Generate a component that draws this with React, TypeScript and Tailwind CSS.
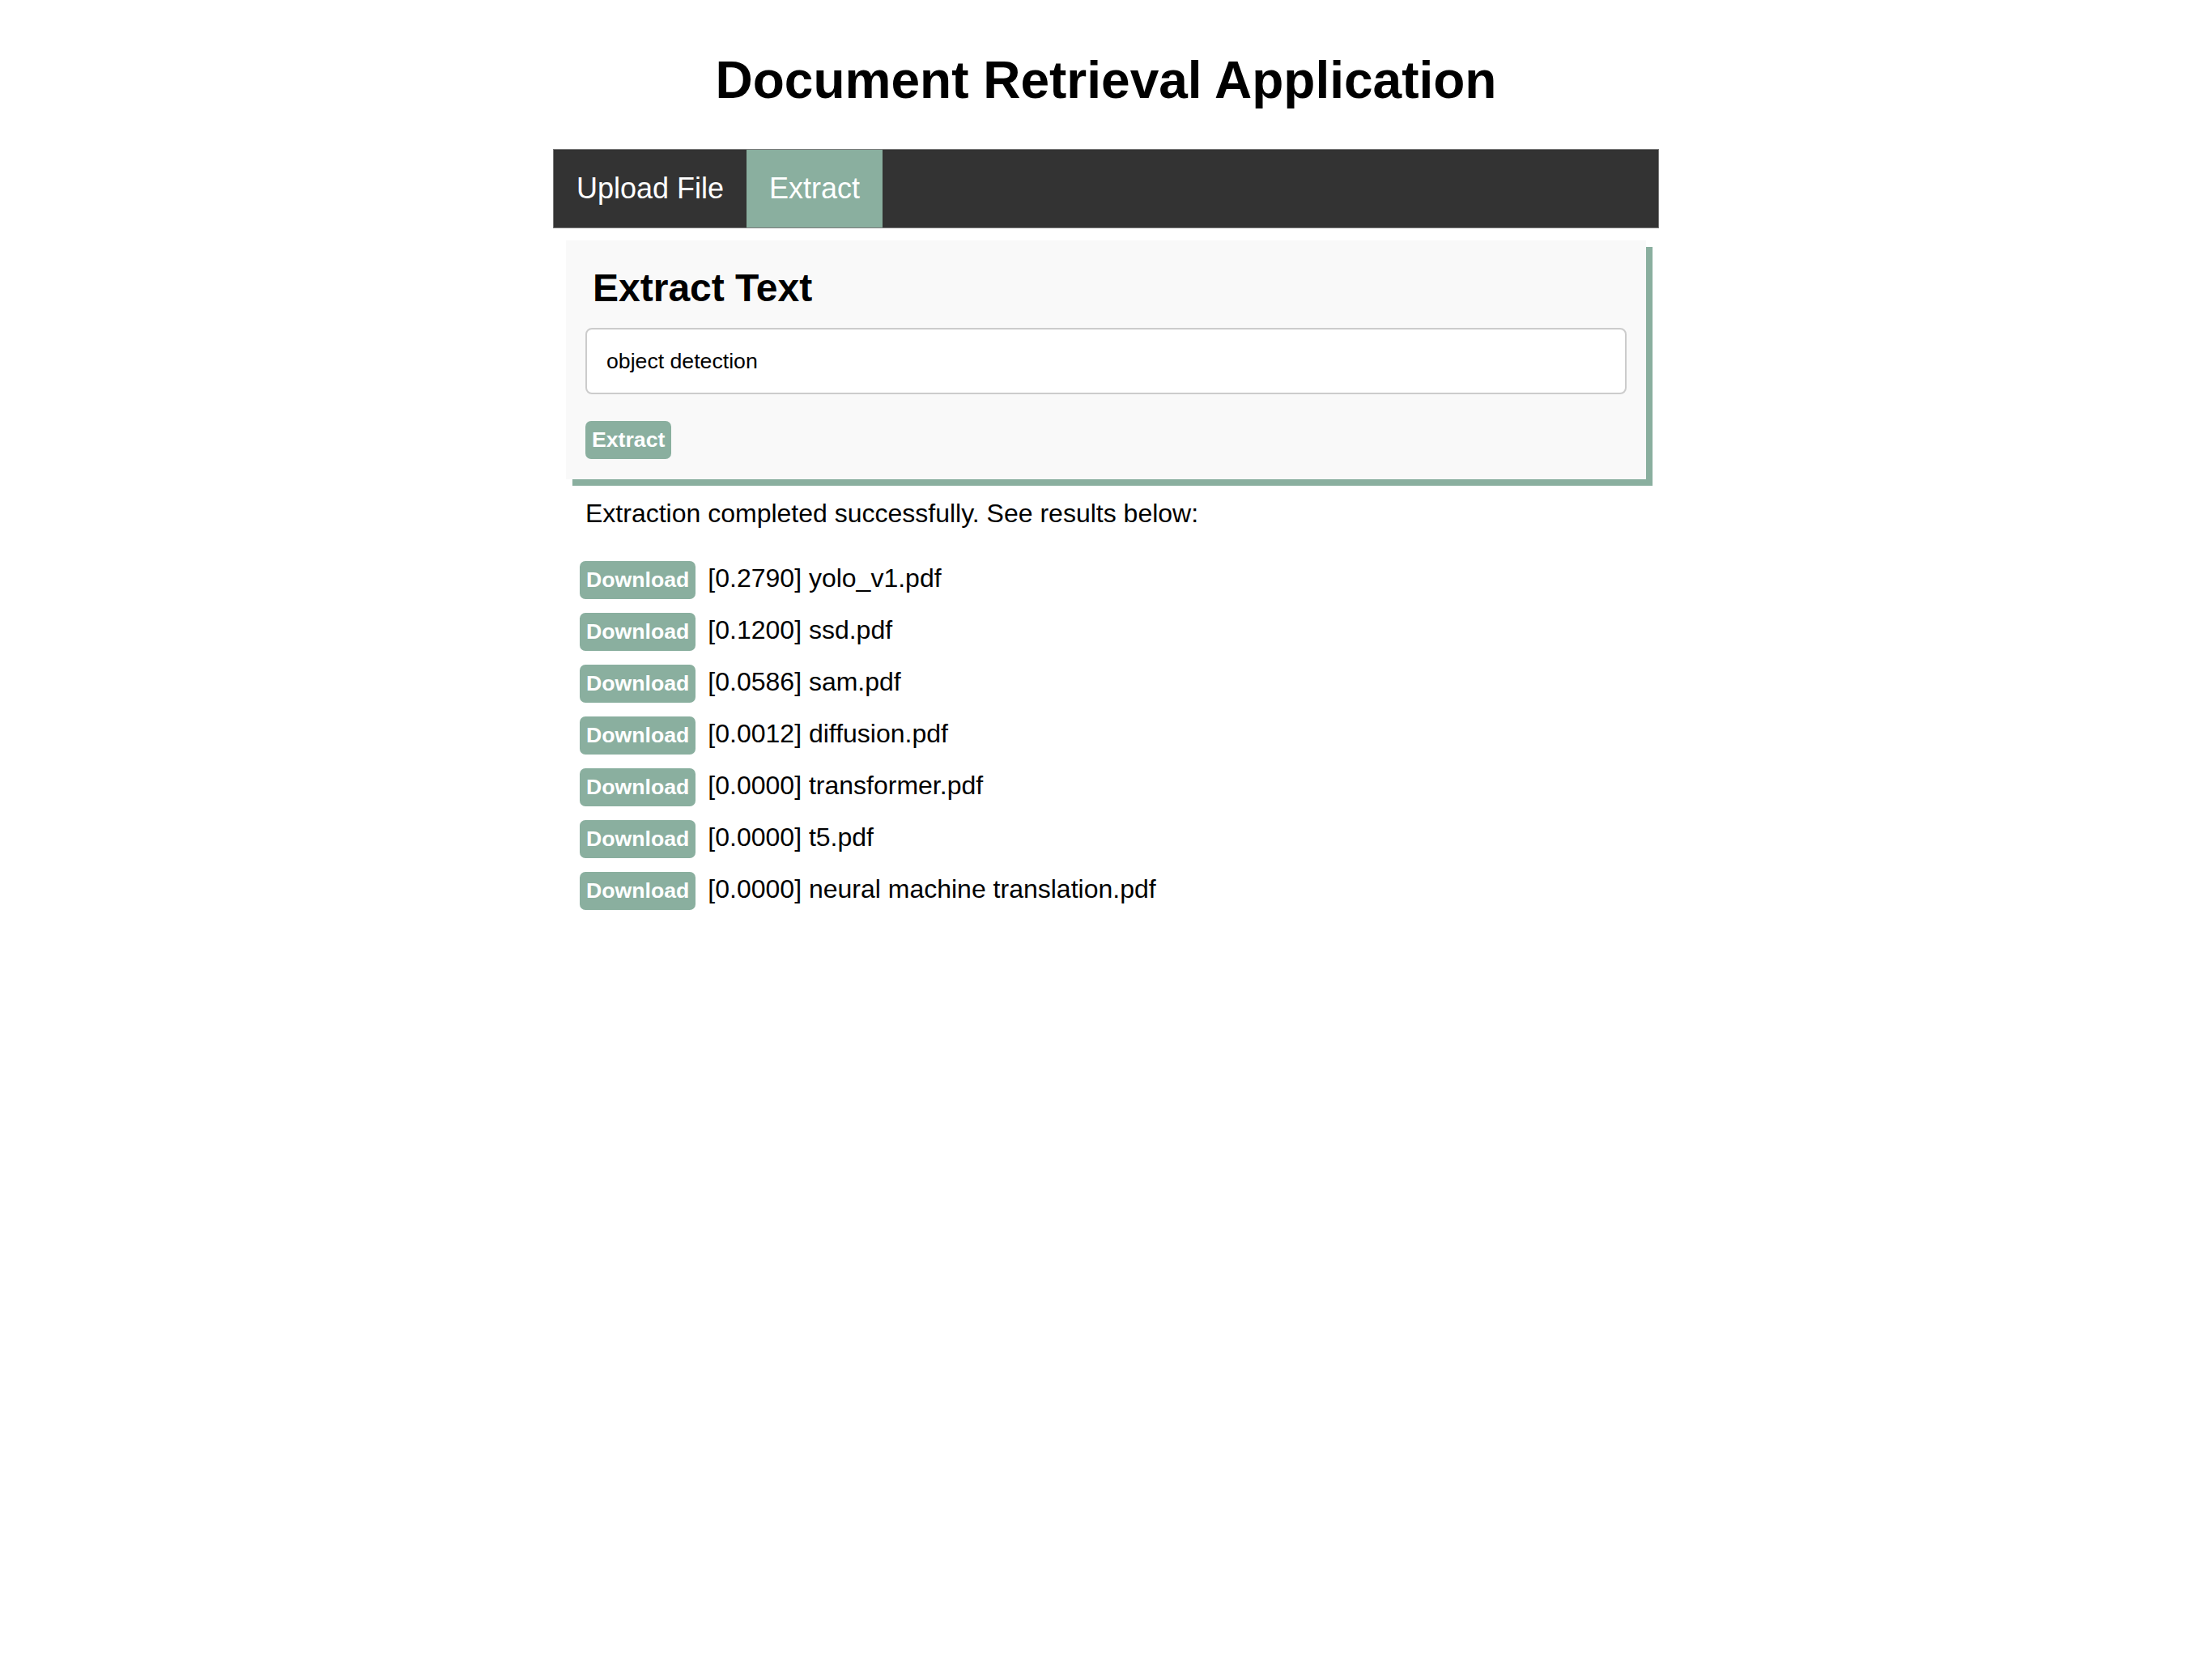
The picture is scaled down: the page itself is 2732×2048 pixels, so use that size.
import { useState } from "react";

const results = [
  { score: "0.2790", name: "yolo_v1.pdf" },
  { score: "0.1200", name: "ssd.pdf" },
  { score: "0.0586", name: "sam.pdf" },
  { score: "0.0012", name: "diffusion.pdf" },
  { score: "0.0000", name: "transformer.pdf" },
  { score: "0.0000", name: "t5.pdf" },
  { score: "0.0000", name: "neural machine translation.pdf" },
];

export default function App() {
  const [tab, setTab] = useState("extract");
  const [query, setQuery] = useState("object detection");

  return (
    <div className="min-h-[2048px] bg-white pt-[62px] font-['Liberation_Sans',Arial,sans-serif] text-black">
      <h1 className="text-center text-[64px] font-bold leading-[74px]">Document Retrieval Application</h1>

      <div className="mx-auto mt-[48px] w-[1366px]">
        <div className="flex border border-[#7a7a7a] bg-[#333333]">
          <button
            onClick={() => setTab("upload")}
            className={`px-[28px] py-[28px] text-[36px] leading-[40px] text-white ${tab === "upload" ? "bg-[#8aaf9f]" : "bg-[#333333]"}`}
          >
            Upload File
          </button>
          <button
            onClick={() => setTab("extract")}
            className={`px-[28px] py-[28px] text-[36px] leading-[40px] text-white ${tab === "extract" ? "bg-[#8aaf9f]" : "bg-[#333333]"}`}
          >
            Extract
          </button>
        </div>

        <div className="mx-[16px] mt-[15px] bg-[#f9f9f9] px-[24px] pt-[31px] pb-[25px] shadow-[8px_8px_0_#8aaf9f]">
          <h2 className="pl-[9px] text-[48px] font-bold leading-[56px]">Extract Text</h2>
          <input
            value={query}
            onChange={(e) => setQuery(e.target.value)}
            className="mt-[21px] block h-[82px] w-full rounded-[8px] border-2 border-[#cccccc] bg-white px-[24px] text-[26.67px] text-black outline-none"
          />
          <button className="mt-[33px] rounded-[7px] bg-[#8aaf9f] px-[8px] py-[8px] text-[26.67px] font-bold leading-[31px] text-white">
            Extract
          </button>
        </div>

        <p className="mt-[24px] ml-[40px] text-[32px] leading-[37px]">
          Extraction completed successfully. See results below:
        </p>

        <ul className="mt-[40px] ml-[33px] flex flex-col gap-[17px]">
          {results.map((r, i) => (
            <li key={i} className="flex items-baseline gap-[15px]">
              <button className="rounded-[7px] bg-[#8aaf9f] px-[8px] py-[8px] text-[26.67px] font-bold leading-[31px] text-white">
                Download
              </button>
              <span className="text-[32px] leading-[37px]">
                [{r.score}] {r.name}
              </span>
            </li>
          ))}
        </ul>
      </div>
    </div>
  );
}
